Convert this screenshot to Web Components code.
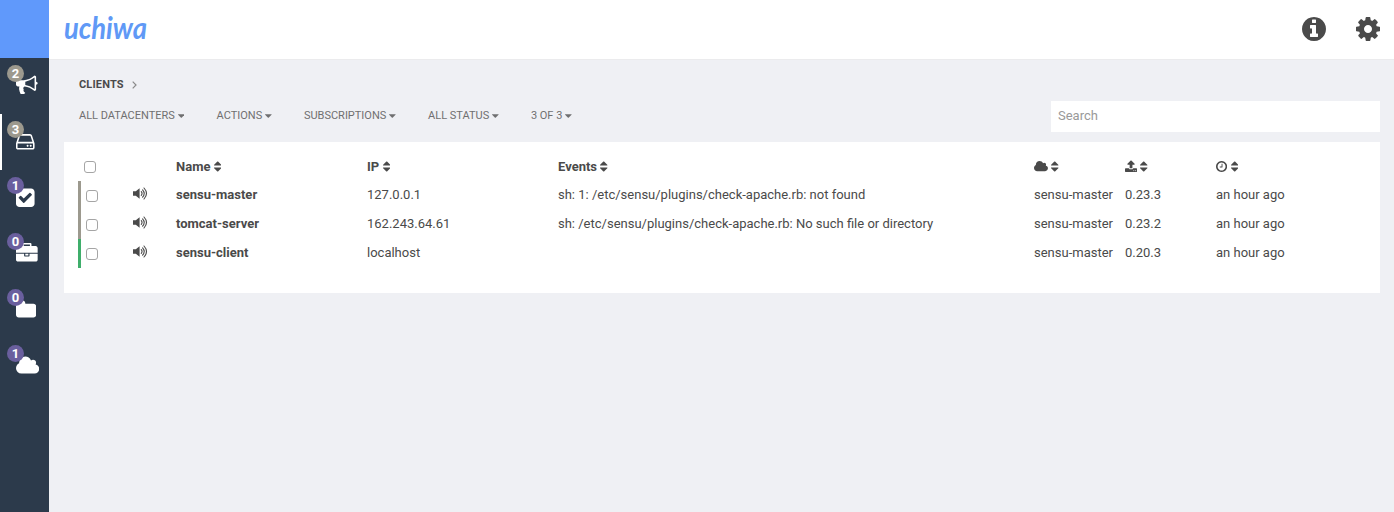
<!DOCTYPE html>
<html lang="en">
<head>
<meta charset="utf-8">
<title>Uchiwa</title>
<style>
html,body{margin:0;height:100%}
body{font:13px/20px Roboto,"Liberation Sans",sans-serif;color:#4a4a4a;background:#eff0f4;overflow:hidden}
</style>
</head>
<body>
<uchiwa-app></uchiwa-app>
<script>
const define=(name,html)=>customElements.define(name,class extends HTMLElement{
  connectedCallback(){
    if(this.shadowRoot)return;
    const t=document.createElement('template');
    t.innerHTML=typeof html==='function'?html(this):html;
    this.attachShadow({mode:'open'}).append(t.content.cloneNode(true));
  }
});

/* name: [viewBox x, viewBox width, path] on an em grid 1792 units high */
const ICONS={
bullhorn:[0,1792,'M1664 640q53 0 90.5 37.5t37.5 90.5-37.5 90.5-90.5 37.5v384q0 52-38 90t-90 38q-417-347-812-380-58 19-91 66t-31 100.5 40 92.5q-20 33-23 65.5t6 58 33.5 55 48 50 61.5 50.5q-29 58-111.5 83t-168.5 11.5-132-55.5q-7-23-29.5-87.5t-32-94.5-23-89-15-101 3.5-98 22-110.5h-122q-66 0-113-47t-47-113v-192q0-66 47-113t113-47h480q435 0 896-384 52 0 90 38t38 90v384zm-128 604v-954q-394 302-768 343v270q377 42 768 341z'],
hdd:[128,1536,'M1168 1216q0 33-23.5 56.5t-56.5 23.5-56.5-23.5-23.5-56.5 23.5-56.5 56.5-23.5 56.5 23.5 23.5 56.5zm256 0q0 33-23.5 56.5t-56.5 23.5-56.5-23.5-23.5-56.5 23.5-56.5 56.5-23.5 56.5 23.5 23.5 56.5zm112 160v-320q0-13-9.5-22.5t-22.5-9.5h-1216q-13 0-22.5 9.5t-9.5 22.5v320q0 13 9.5 22.5t22.5 9.5h1216q13 0 22.5-9.5t9.5-22.5zm-1230-480h1180l-157-482q-4-13-16-21.5t-26-8.5h-782q-14 0-26 8.5t-16 21.5zm1358 160v320q0 66-47 113t-113 47h-1216q-66 0-113-47t-47-113v-320q0-25 16-75l197-606q17-53 63-86t101-33h782q55 0 101 33t63 86l197 606q16 50 16 75z'],
check:[128,1536,'M813 1299l614-614q19-19 19-45t-19-45l-102-102q-19-19-45-19t-45 19l-467 467-211-211q-19-19-45-19t-45 19l-102 102q-19 19-19 45t19 45l358 358q19 19 45 19t45-19zm851-883v960q0 119-84.5 203.5t-203.5 84.5h-960q-119 0-203.5-84.5t-84.5-203.5v-960q0-119 84.5-203.5t203.5-84.5h960q119 0 203.5 84.5t84.5 203.5z'],
briefcase:[0,1792,'M640 256h512v-128h-512v128zm1152 640v480q0 66-47 113t-113 47h-1472q-66 0-113-47t-47-113v-480h672v160q0 26 19 45t45 19h320q26 0 45-19t19-45v-160h672zm-768 0v128h-256v-128h256zm768-480v384h-1792v-384q0-66 47-113t113-47h352v-160q0-40 28-68t68-28h576q40 0 68 28t28 68v160h352q66 0 113 47t47 113z'],
folder:[64,1664,'M1728 608v704q0 92-66 158t-158 66h-1216q-92 0-158-66t-66-158v-960q0-92 66-158t158-66h320q92 0 158 66t66 158v32h672q92 0 158 66t66 158z'],
cloud:[64,1920,'M1984 1152q0 159-112.5 271.5t-271.5 112.5h-1088q-185 0-316.5-131.5t-131.5-316.5q0-132 71-241.5t187-163.5q-2-28-2-43 0-212 150-362t362-150q158 0 286.5 88t187.5 230q70-62 166-62 106 0 181 75t75 181q0 75-41 138 129 30 213 134.5t84 239.5z'],
info:[128,1536,'M1152 1376v-160q0-14-9-23t-23-9h-96v-512q0-14-9-23t-23-9h-320q-14 0-23 9t-9 23v160q0 14 9 23t23 9h96v320h-96q-14 0-23 9t-9 23v160q0 14 9 23t23 9h448q14 0 23-9t9-23zm-128-896v-160q0-14-9-23t-23-9h-192q-14 0-23 9t-9 23v160q0 14 9 23t23 9h192q14 0 23-9t9-23zm640 416q0 209-103 385.5t-279.5 279.5-385.5 103-385.5-103-279.5-279.5-103-385.5 103-385.5 279.5-279.5 385.5-103 385.5 103 279.5 279.5 103 385.5z'],
cog:[128,1536,'M1152 896q0-106-75-181t-181-75-181 75-75 181 75 181 181 75 181-75 75-181zm512-109v222q0 12-8 23t-20 13l-185 28q-19 54-39 91 35 50 107 138 10 12 10 25t-9 23q-27 37-99 108t-94 71q-12 0-26-9l-138-108q-44 23-91 38-16 136-29 186-7 28-36 28h-222q-14 0-24.5-8.5t-11.5-21.5l-28-184q-49-16-90-37l-141 107q-10 9-25 9-14 0-25-11-126-114-165-168-7-10-7-23 0-12 8-23 15-21 51-66.5t54-70.5q-27-50-41-99l-183-27q-13-2-21-12.5t-8-23.5v-222q0-12 8-23t19-13l186-28q14-46 39-92-40-57-107-138-10-12-10-24 0-10 9-23 26-36 98.5-107.5t94.5-71.5q13 0 26 10l138 107q44-23 91-38 16-136 29-186 7-28 36-28h222q14 0 24.5 8.5t11.5 21.5l28 184q49 16 90 37l142-107q9-9 24-9 13 0 25 10 129 119 165 170 7 8 7 22 0 12-8 23-15 21-51 66.5t-54 70.5q26 50 41 98l183 28q13 2 21 12.5t8 23.5z'],
upload:[64,1664,'M1344 1472q0-26-19-45t-45-19-45 19-19 45 19 45 45 19 45-19 19-45zm256 0q0-26-19-45t-45-19-45 19-19 45 19 45 45 19 45-19 19-45zm128-224v320q0 40-28 68t-68 28h-1472q-40 0-68-28t-28-68v-320q0-40 28-68t68-28h427q21 56 70.5 92t110.5 36h256q61 0 110.5-36t70.5-92h427q40 0 68 28t28 68zm-325-648q-17 40-59 40h-256v448q0 26-19 45t-45 19h-256q-26 0-45-19t-19-45v-448h-256q-42 0-59-40-17-39 14-69l448-448q18-19 45-19t45 19l448 448q31 30 14 69z'],
clock:[128,1536,'M1024 544v448q0 14-9 23t-23 9h-320q-14 0-23-9t-9-23v-64q0-14 9-23t23-9h224v-352q0-14 9-23t23-9h64q14 0 23 9t9 23zm416 352q0-148-73-273t-198-198-273-73-273 73-198 198-73 273 73 273 198 198 273 73 273-73 198-198 73-273zm224 0q0 209-103 385.5t-279.5 279.5-385.5 103-385.5-103-279.5-279.5-103-385.5 103-385.5 279.5-279.5 385.5-103 385.5 103 279.5 279.5 103 385.5z'],
sort:[384,1024,'M1408 1088q0 26-19 45l-448 448q-19 19-45 19t-45-19l-448-448q-19-19-19-45t19-45 45-19h896q26 0 45 19t19 45zm0-384q0 26-19 45t-45 19h-896q-26 0-45-19t-19-45 19-45l448-448q19-19 45-19t45 19l448 448q19 19 19 45z'],
caret:[384,1024,'M1408 704q0 26-19 45l-448 448q-19 19-45 19t-45-19l-448-448q-19-19-19-45t19-45 45-19h896q26 0 45 19t19 45z']
};
define('u-icon',el=>{
  const [x,w,d]=ICONS[el.getAttribute('name')];
  return `<style>:host{display:inline-flex;flex:none}svg{height:1em;width:${w/1792}em;display:block;fill:currentColor}</style><svg viewBox="${x} 0 ${w} 1792" aria-hidden="true"><path d="${d}"/></svg>`;
});

define('u-volume',`<style>:host{display:block;width:15px;height:13px}svg{display:block}</style>
<svg width="15" height="13" viewBox="0 0 15 13" fill="none" stroke="#4a4a4a" stroke-linecap="round"><path d="M0 4.200h2.800L6.600 1.200v10.600L2.800 8.800H0z" fill="#4a4a4a" stroke="none"/><path d="M8.300 4.600q1.500 1.900 0 3.800M9.600 2.800q3.200 3.700 0 7.400M11 1q5 5.500 0 11" stroke-width="1.100"/></svg>`);

define('u-nav-item',el=>`<style>
:host{display:block;height:56px;box-sizing:border-box;padding:17px 0 0 16px;position:relative;color:#fff;font-size:21.670px}
:host([icon="bullhorn"]){padding-top:16px}
:host([active]){box-shadow:inset 2px 0 #fff}
u-icon{display:block}
b{position:absolute;left:7px;top:7px;width:17px;height:17px;border-radius:50%;background:${el.getAttribute('tone')==='grey'?'#9c998e':'#6a5f9e'};font-size:13px;line-height:17px;text-align:center}
</style><u-icon name="${el.getAttribute('icon')}"></u-icon><b><slot></slot></b>`);

define('u-sidebar',`<style>
:host{display:flex;flex-direction:column;width:49px;height:100%;background:#2c3a4b}
.brand{height:58px;background:#6099fb}
</style><div class="brand"></div>
<u-nav-item icon="bullhorn" tone="grey">2</u-nav-item>
<u-nav-item icon="hdd" tone="grey" active>3</u-nav-item>
<u-nav-item icon="check">1</u-nav-item>
<u-nav-item icon="briefcase">0</u-nav-item>
<u-nav-item icon="folder">0</u-nav-item>
<u-nav-item icon="cloud">1</u-nav-item>`);

define('u-header',`<style>
:host{display:flex;justify-content:space-between;align-items:center;height:60px;box-sizing:border-box;padding:0 14px 1px 14px;background:#fff;border-bottom:1px solid #ebebed}
.logo{display:block;overflow:visible}
.tools{display:flex;gap:30px;font-size:28px;color:#4a4a4a}
</style>
<svg class="logo" width="86" height="40"><text x="1" y="30" textLength="83" lengthAdjust="spacingAndGlyphs" font-family="Lato" font-style="italic" font-weight="700" font-size="31" fill="#6099f6">uchiwa</text></svg>
<div class="tools"><u-icon name="info"></u-icon><u-icon name="cog"></u-icon></div>`);

define('u-dropdown',`<style>:host{display:flex;align-items:center;gap:3px;font-size:11px;line-height:16px;color:#6f6f70;white-space:nowrap}u-icon{font-size:11.600px}</style><slot></slot><u-icon name="caret"></u-icon>`);

define('u-toolbar',`<style>
:host{display:block;padding:16px 0 0 15px}
.crumb{display:flex;align-items:center;gap:8px;height:18px;font-size:11px;font-weight:700;letter-spacing:.15px}
.bar{display:flex;justify-content:space-between;height:31px;margin-top:7px}
.menus{display:flex;gap:32.100px;height:29px}
.search{width:329px;height:31px;box-sizing:border-box;padding:0 7px;background:#fff;color:#999;line-height:30px}
</style>
<div class="crumb"><span>CLIENTS</span><svg width="5" height="8" fill="none" stroke="#8a8a8a" stroke-width="1.200"><path d="M.7.7 4 4 .7 7.300"/></svg></div>
<div class="bar"><div class="menus"><u-dropdown>ALL DATACENTERS</u-dropdown><u-dropdown>ACTIONS</u-dropdown><u-dropdown>SUBSCRIPTIONS</u-dropdown><u-dropdown>ALL STATUS</u-dropdown><u-dropdown>3 OF 3</u-dropdown></div><div class="search">Search</div></div>`);

define('u-check',`<style>:host{display:block;width:12px;height:12px;box-sizing:border-box;border:1px solid #a5a5a5;border-radius:3px;background:#fff}</style>`);

define('u-row',`<style>
:host{display:grid;grid-template-columns:52px 43px 191px 191px 476px 91px 91px 1fr;align-items:center;height:29px;white-space:nowrap;border-left:3px solid var(--status,transparent);line-height:29px}
::slotted(u-check){margin:0 0 0 5px}
::slotted(u-volume){margin-top:-4px}
::slotted(.text){margin-top:-3px}
::slotted(.head){display:flex;align-items:center;gap:3.400px;font-weight:700}
</style><slot></slot>`);

define('u-table',()=>{
  const head=['Name','IP','Events','cloud','upload','clock'].map((h,i)=>`<span class="head">${i<3?h:`<u-icon name="${h}"></u-icon>`}<u-icon name="sort"></u-icon></span>`).join('');
  const rows=[
    ['sensu-master','127.0.0.1','sh: 1: /etc/sensu/plugins/check-apache.rb: not found','0.23.3','#9c998e'],
    ['tomcat-server','162.243.64.61','sh: /etc/sensu/plugins/check-apache.rb: No such file or directory','0.23.2','#9c998e'],
    ['sensu-client','localhost','','0.20.3','#3fae6b']
  ].map(([n,ip,e,v,c])=>`<u-row style="--status:${c}"><u-check></u-check><u-volume></u-volume><b class="text">${n}</b><span class="text">${ip}</span><span class="text">${e}</span><span class="text">sensu-master</span><span class="text">${v}</span><span class="text">an hour ago</span></u-row>`).join('');
  return `<style>
:host{display:block;margin-top:10px;height:151px;box-sizing:border-box;padding:10px 14px 0;background:#fff}
.top u-check{margin:1px 0 0 3px}
</style><u-row class="top"><u-check></u-check><span></span>${head}</u-row>${rows}`;
});

define('uchiwa-app',`<style>
:host{display:flex;height:100vh}
main{flex:1;min-width:0}
.content{padding:0 14px 0 15px}
</style><u-sidebar></u-sidebar><main><u-header></u-header><div class="content"><u-toolbar></u-toolbar><u-table></u-table></div></main>`);
</script>
</body>
</html>
